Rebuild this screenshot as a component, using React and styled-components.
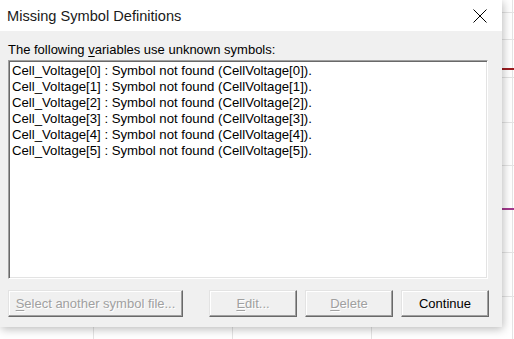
import React from 'react';
import styled, { createGlobalStyle } from 'styled-components';

const GlobalStyle = createGlobalStyle`
    html, body {
        margin: 0;
        padding: 0;
        background: #ffffff;
        width: 514px;
        height: 339px;
        overflow: hidden;
    }
    #root {
        position: relative;
        width: 514px;
        height: 339px;
    }
`;

const Backdrop = styled.svg`
    position: absolute;
    left: 0;
    top: 0;
`;

const Window = styled.div`
    position: absolute;
    left: 0;
    top: 0;
    width: 502px;
    height: 327px;
    background: #f0f0f0;
    box-shadow: 1px 2px 9px rgba(0, 0, 0, 0.28);
    display: flex;
    flex-direction: column;
    font-family: "Liberation Sans", Arial, sans-serif;
    color: #000000;
`;

const TitleBar = styled.div`
    position: relative;
    height: 31px;
    background: #ffffff;
    display: flex;
    align-items: center;
    padding-left: 7px;
    font-size: 14.6px;
    color: #1a1a1a;
`;

const CloseIcon = styled.svg`
    position: absolute;
    left: 473px;
    top: 9px;
`;

const Body = styled.div`
    padding: 10px 0 0 8px;
    display: flex;
    flex-direction: column;
    font-size: 13px;
`;

const Label = styled.div`
    line-height: 16px;
    height: 16px;
    padding-top: 1px;
`;

const ListBox = styled.div`
    margin-top: 2px;
    width: 480px;
    height: 219px;
    box-sizing: border-box;
    background: #ffffff;
    border: 1px solid;
    border-color: #a0a0a0 #ffffff #ffffff #a0a0a0;
    box-shadow: inset 1px 1px #696969, inset -1px -1px #e3e3e3;
    padding: 2px 3px;
    font-size: 13.2px;
`;

const ListLine = styled.div`
    line-height: 16px;
    white-space: nowrap;
`;

const ButtonRow = styled.div`
    margin-top: 11px;
    display: flex;
    gap: 8px;
`;

const Button = styled.div`
    width: ${p => p.$width || 88}px;
    height: 27px;
    box-sizing: border-box;
    margin-right: ${p => p.$after || 0}px;
    background: #f0f0f0;
    border: 1px solid;
    border-color: #e3e3e3 #696969 #696969 #e3e3e3;
    box-shadow: inset -1px -1px #a0a0a0, inset 1px 1px #ffffff;
    display: flex;
    align-items: center;
    justify-content: center;
    font-size: 13px;
    color: ${p => (p.$disabled ? '#a0a0a0' : '#000000')};
    text-shadow: ${p => (p.$disabled ? '1px 1px #ffffff' : 'none')};
`;

const Key = styled.span`
    text-decoration: underline;
    text-underline-offset: 2px;
`;

const entries = [0, 1, 2, 3, 4, 5];

const gridH = [12, 39, 77, 122, 165, 252, 296];
const gridV = [93, 232, 371, 512];

export default function App() {
    return (
        <>
            <GlobalStyle />
            <Backdrop width="514" height="339" viewBox="0 0 514 339">
                {gridH.map(y => (
                    <line key={'h' + y} x1="0" x2="514" y1={y + 0.5} y2={y + 0.5} stroke="#e4e4e4" />
                ))}
                {gridV.map(x => (
                    <line key={'v' + x} x1={x + 0.5} x2={x + 0.5} y1="0" y2="339" stroke="#e4e4e4" />
                ))}
                <rect x="500" y="68" width="14" height="2" fill="#9b1c20" />
                <rect x="500" y="208" width="14" height="2" fill="#a2388c" />
            </Backdrop>
            <Window>
                <TitleBar>
                    Missing Symbol Definitions
                    <CloseIcon width="14" height="14" viewBox="0 0 14 14">
                        <path d="M0.5 0.5 L13.5 13.5 M13.5 0.5 L0.5 13.5" stroke="#000000" strokeWidth="1" fill="none" />
                    </CloseIcon>
                </TitleBar>
                <Body>
                    <Label>The following <Key>v</Key>ariables use unknown symbols:</Label>
                    <ListBox>
                        {entries.map(i => (
                            <ListLine key={i}>
                                Cell_Voltage[{i}] : Symbol not found (CellVoltage[{i}]).
                            </ListLine>
                        ))}
                    </ListBox>
                    <ButtonRow>
                        <Button $disabled $width={175} $after={18}><Key>S</Key>elect another symbol file...</Button>
                        <Button $disabled><Key>E</Key>dit...</Button>
                        <Button $disabled><Key>D</Key>elete</Button>
                        <Button>Continue</Button>
                    </ButtonRow>
                </Body>
            </Window>
        </>
    );
}
